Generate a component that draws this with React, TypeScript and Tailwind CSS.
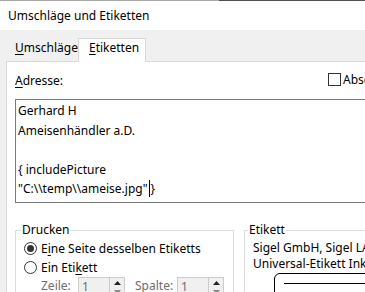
import React from 'react';

const font = { fontFamily: '"Noto Sans", "Open Sans", sans-serif' };

const Radio = ({ checked }: { checked?: boolean }) => (
  <span className="w-[13px] h-[13px] rounded-full border border-[#333333] bg-white flex items-center justify-center shrink-0">
    {checked && <span className="w-[7px] h-[7px] rounded-full bg-[#333333]" />}
  </span>
);

const Spinner = ({ value }: { value: string }) => (
  <div className="w-[47px] h-[20px] shrink-0 border border-[#cccccc] bg-[#f0f0f0] flex">
    <span className="flex-1 pl-[3px] text-[#6d6d6d] leading-[18px]">{value}</span>
    <div className="w-[15px] flex flex-col border-l border-[#cccccc]">
      <div className="flex-1 flex items-center justify-center">
        <svg width="7" height="4" viewBox="0 0 7 4">
          <path d="M0 4 L3.5 0 L7 4 Z" fill="#222" />
        </svg>
      </div>
      <div className="flex-1 flex items-center justify-center">
        <svg width="7" height="4" viewBox="0 0 7 4">
          <path d="M0 0 L3.5 4 L7 0 Z" fill="#888" />
        </svg>
      </div>
    </div>
  </div>
);

const App = () => {
  return (
    <div className="w-[365px] h-[292px] overflow-hidden bg-white flex flex-col text-[12px] text-black" style={font}>
      <div className="h-px flex shrink-0">
        <div className="w-[219px] bg-[#a8a8a8]" />
        <div className="flex-1 bg-[#505050]" />
      </div>
      <div className="h-[29px] shrink-0 flex items-center pl-[8px] leading-4">Umschläge und Etiketten</div>

      <div className="flex-1 bg-[#f0f0f0] pl-[6px] flex flex-col">
        <div className="h-[31px] shrink-0 flex items-end">
          <div className="w-[72px] h-[23px] pl-[9px] pt-[2px] leading-4">
            <span className="underline underline-offset-2">U</span>mschläge
          </div>
          <div className="w-[68px] h-[24px] -mb-px relative z-10 bg-white border-l border-r border-t border-[#d9d9d9] pl-[10px] pt-[1px] leading-4">
            <span className="underline underline-offset-2">E</span>tiketten
          </div>
        </div>

        <div className="flex-1 bg-white border-l border-t border-[#d9d9d9] pl-[8px] w-[440px]">
          <div className="flex items-start pt-[11px] mb-[5px] h-[32px]">
            <div className="w-[313px] shrink-0 leading-4">
              <span className="underline underline-offset-2">A</span>dresse:
            </div>
            <span className="w-[13px] h-[13px] border border-[#333333] shrink-0" />
            <span className="ml-[2px] whitespace-nowrap leading-[14px]">Absender weglassen</span>
          </div>

          <div className="h-[104px] border border-[#7a7a7a] pl-[2px] pt-[1px] leading-[19.5px] whitespace-nowrap">
            <div>Gerhard H</div>
            <div>Ameisenhändler a.D.</div>
            <div>&nbsp;</div>
            <div>{'{ includePicture'}</div>
            <div className="flex items-center">
              <span>"C:\\temp\\ameise.jpg"</span>
              <span className="w-px h-[17px] bg-black mx-px" />
              <span>{'}'}</span>
            </div>
          </div>

          <div className="flex gap-[10px] mt-[19px]">
            <fieldset className="w-[219px] shrink-0 border border-[#dcdcdc] h-[80px]">
              <legend className="ml-[5px] px-px leading-4">Drucken</legend>
              <div className="pl-[8px] pt-px">
                <div className="flex items-center gap-[4px] h-[19px]">
                  <Radio checked />
                  <span className="whitespace-nowrap">
                    E<span className="underline underline-offset-2">i</span>ne Seite desselben Etiketts
                  </span>
                </div>
                <div className="flex items-center gap-[4px] h-[19px]">
                  <Radio />
                  <span className="whitespace-nowrap">
                    Ein Eti<span className="underline underline-offset-2">k</span>ett
                  </span>
                </div>
                <div className="flex items-start pl-[17px] text-[#6d6d6d] leading-4">
                  <span className="w-[37px] shrink-0 pt-[1px]">Zeile:</span>
                  <Spinner value="1" />
                  <span className="w-[52px] shrink-0 pl-[10px] pt-[1px]">Spalte:</span>
                  <Spinner value="1" />
                </div>
              </div>
            </fieldset>

            <fieldset className="flex-1 border border-[#dcdcdc] h-[80px]">
              <legend className="ml-[3px] px-px leading-4">Etikett</legend>
              <div className="pl-[8px] pt-[2px] leading-4 whitespace-nowrap">
                <div>Sigel GmbH, Sigel LA120</div>
                <div>Universal-Etikett Ink/Laser/Copy</div>
                <div className="ml-[21px] mt-px w-[120px] h-[60px] border border-black rounded-[6px] pt-[9px] pl-[9px]">
                  <div className="h-px bg-black w-[100px]" />
                </div>
              </div>
            </fieldset>
          </div>
        </div>
      </div>
    </div>
  );
};

export default App;
